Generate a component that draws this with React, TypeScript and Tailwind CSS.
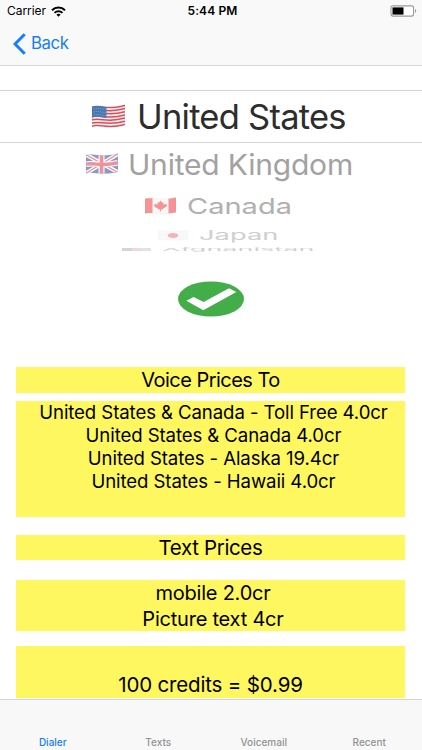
import type { ReactNode } from 'react'

function wave(y: number) {
  return `M0 ${y} C9 ${y - 2.6} 15 ${y + 3.4} 33 ${y - 1.8}`
}

const OUTLINE = 'M0 2.4 C9 -0.2 15 5.8 33 0.6 V21.2 C15 26.4 9 20.4 0 23 Z'

function Flag({ id, className, children }: { id: string; className: string; children: ReactNode }) {
  return (
    <svg viewBox="0 0 33 25" preserveAspectRatio="none" className={`shrink-0 ${className}`} aria-hidden="true">
      <clipPath id={id}>
        <path d={OUTLINE} />
      </clipPath>
      <g clipPath={`url(#${id})`}>{children}</g>
      <path d={OUTLINE} fill="none" stroke="#000" strokeOpacity="0.12" strokeWidth="0.6" />
    </svg>
  )
}

function UnitedStatesFlag() {
  return (
    <Flag id="us" className="h-[25px] w-[33px]">
      <rect width="33" height="25" fill="#f4eef0" />
      {[0, 1, 2, 3, 4, 5, 6].map((i) => (
        <path key={i} d={wave(3.2 + i * 3.17)} fill="none" stroke="#dc4d5a" strokeWidth="1.5" />
      ))}
      <path d="M0 2.4 C6 0.7 10 2.8 14.5 2.9 V14 C10 13.8 6 11.8 0 13.4 Z" fill="#4a78b0" />
      <path d="M1.5 5 C6 3.6 10 5.5 14 5.6 M1.5 8 C6 6.6 10 8.5 14 8.6 M1.5 11 C6 9.6 10 11.5 14 11.6" fill="none" stroke="#8fb0d4" strokeWidth="0.8" strokeDasharray="1 1.3" />
    </Flag>
  )
}

function UnitedKingdomFlag() {
  return (
    <Flag id="gb" className="h-[22px] w-[32px] opacity-55">
      <rect width="33" height="25" fill="#2c4a96" />
      <path d="M0 2 L33 22 M0 23 L33 1" stroke="#fff" strokeWidth="4.4" />
      <path d="M0 2 L33 22 M0 23 L33 1" stroke="#e0384b" strokeWidth="1.4" />
      <path d={`M16 0 V25 ${wave(12.8)}`} fill="none" stroke="#fff" strokeWidth="6.2" />
      <path d={`M16 0 V25 ${wave(12.8)}`} fill="none" stroke="#e0384b" strokeWidth="3.8" />
    </Flag>
  )
}

function CanadaFlag() {
  return (
    <Flag id="ca" className="h-[18px] w-[31px] opacity-55">
      <rect width="33" height="25" fill="#f4f4f4" />
      <rect width="8" height="25" fill="#ee3b43" />
      <rect x="25" width="8" height="25" fill="#ee3b43" />
      <path d="M16.5 5 L18.2 8 L20 7.4 L19.5 11 L21.5 9.4 L23.5 11.2 L22.6 13.6 L19 16.3 L19.2 17.2 L17 17 V20 H16 V17 L13.8 17.2 L14 16.3 L10.4 13.6 L9.5 11.2 L11.5 9.4 L13.5 11 L13 7.4 L14.8 8 Z" fill="#ee3b43" />
    </Flag>
  )
}

function JapanFlag() {
  return (
    <Flag id="jp" className="h-[11px] w-[30px] opacity-40">
      <rect width="33" height="25" fill="#f0f0f0" />
      <circle cx="16.5" cy="12.5" r="5.8" fill="#e0404d" />
    </Flag>
  )
}

function AfghanistanFlag() {
  return (
    <svg viewBox="0 0 29 3" className="h-[3px] w-[29px] shrink-0 opacity-30" aria-hidden="true">
      <rect width="10" height="3" fill="#777" />
      <rect x="10" width="9" height="3" fill="#d08088" />
      <rect x="19" width="10" height="3" fill="#8fae9b" />
    </svg>
  )
}

function CountryPicker() {
  return (
    <div className="flex h-[192px] flex-col overflow-hidden pt-[24px] leading-none whitespace-nowrap">
      <div className="flex h-[53px] items-center border-y border-[#d5d5d5] pl-[92px]">
        <UnitedStatesFlag />
        <span className="ml-[12px] pt-[2px] text-[34.5px] tracking-[-0.75px] text-[#2d2d2d]">United States</span>
      </div>
      <div className="flex h-[42px] items-center pl-[86px]">
        <UnitedKingdomFlag />
        <span className="ml-[10px] origin-left scale-y-[0.96] text-[30px] tracking-[-0.2px] text-[#a2a2a2]">United Kingdom</span>
      </div>
      <div className="flex h-[41px] items-center pl-[145px]">
        <CanadaFlag />
        <span className="ml-[11px] origin-left scale-y-[0.76] pt-px text-[29px] text-[#b0b0b0]">Canada</span>
      </div>
      <div className="flex h-[18px] items-center pl-[158px]">
        <JapanFlag />
        <span className="ml-[11px] origin-left scale-y-[0.48] pt-[2px] text-[27.3px] text-[#cfcfcf]">Japan</span>
      </div>
      <div className="flex h-[10px] items-center pl-[122px]">
        <AfghanistanFlag />
        <span className="ml-[11px] origin-left scale-y-[0.15] text-[27px] text-[#cfcfcf]">Afghanistan</span>
      </div>
    </div>
  )
}

const voicePrices = [
  'United States & Canada - Toll Free 4.0cr',
  'United States & Canada 4.0cr',
  'United States - Alaska 19.4cr',
  'United States - Hawaii 4.0cr',
]

const tabs = ['Dialer', 'Texts', 'Voicemail', 'Recent']

export default function App() {
  return (
    <div className="flex h-[750px] w-[422px] flex-col overflow-hidden bg-white font-['Inter',sans-serif] text-black">
      <header className="h-[66px] shrink-0 border-b border-[#d9d9d9] bg-[#f9f9f9]">
        <div className="grid h-[22px] grid-cols-3 items-center pr-[4px] pl-[7px] leading-none">
          <div className="flex items-center gap-[5px]">
            <span className="text-[12px] tracking-[-0.05px]">Carrier</span>
            <svg viewBox="0 0 15 11" className="h-[11px] w-[15px]" aria-hidden="true">
              <path d="M1 4.2 A9.2 9.2 0 0 1 14 4.2" fill="none" stroke="#000" strokeWidth="2" />
              <path d="M3.5 6.9 A5.7 5.7 0 0 1 11.5 6.9" fill="none" stroke="#000" strokeWidth="1.8" />
              <path d="M5.4 8.7 A3 3 0 0 1 9.6 8.7 L7.5 10.8 Z" />
            </svg>
          </div>
          <span className="text-center text-[12px] font-semibold tracking-[0.1px]">5:44 PM</span>
          <svg viewBox="0 0 28 12" className="h-[12px] w-[28px] justify-self-end" aria-hidden="true">
            <rect x="1" y="0.9" width="22.6" height="10.2" rx="2" fill="#fff" stroke="#9a9a9a" strokeWidth="1.1" />
            <rect x="2.5" y="2.4" width="11" height="7.2" />
            <path d="M25 4 Q27.5 6 25 8 Z" fill="#9a9a9a" />
          </svg>
        </div>
        <div className="flex h-[43px] items-center pl-[13px] text-[#157efb]">
          <svg viewBox="0 0 13 22" className="h-[22px] w-[13px]" aria-hidden="true">
            <path d="M11.7 1.2 L2 11 L11.7 20.8" fill="none" stroke="currentColor" strokeWidth="3" />
          </svg>
          <span className="ml-[5px] text-[16.8px] leading-none tracking-[-0.4px]">Back</span>
        </div>
      </header>

      <main className="flex min-h-0 flex-1 flex-col">
        <CountryPicker />
        <svg viewBox="0 0 66 36" className="mt-[23px] h-[36px] w-[66px] shrink-0 self-center" aria-hidden="true">
          <ellipse cx="33" cy="18" rx="33" ry="17.6" fill="#42ad49" />
          <path d="M8.3 19.8 L15.6 16 L25.6 21 L51 7.3 L58.3 11 L25.3 29.3 Z" fill="#fff" />
        </svg>

        <div className="mt-[50px] mr-[17px] ml-[16px] flex flex-col text-center whitespace-nowrap">
          <h2 className="h-[26px] bg-[#fff75f] text-[20px] leading-[27px] tracking-[-0.53px]">Voice Prices To</h2>
          <ul className="mt-[8px] h-[116px] bg-[#fff75f] pl-[6px] text-[18.6px] leading-[23px] tracking-[-0.09px]">
            {voicePrices.map((price) => (
              <li key={price}>{price}</li>
            ))}
          </ul>
          <h2 className="mt-[18px] h-[25px] bg-[#fff75f] text-[20.5px] leading-[26px] tracking-[-0.35px]">Text Prices</h2>
          <div className="mt-[20px] h-[51px] bg-[#fff75f] pt-px pl-[5px] text-[20px] leading-[25.5px] tracking-[-0.22px]">
            <p>mobile 2.0cr</p>
            <p>Picture text 4cr</p>
          </div>
          <p className="mt-[15px] h-[52px] bg-[#fff75f] pt-[26px] text-[20.5px] leading-[26px] tracking-[-0.17px]">100 credits = $0.99</p>
        </div>
      </main>

      <nav className="grid h-[51px] shrink-0 grid-cols-4 items-end border-t border-[#d5d5d5] bg-[#f8f8f8] text-center text-[10px] leading-[15px] font-medium">
        {tabs.map((tab, i) => (
          <span key={tab} className={i === 0 ? 'text-[#157efb]' : 'text-[#929292]'}>
            {tab}
          </span>
        ))}
      </nav>
    </div>
  )
}
